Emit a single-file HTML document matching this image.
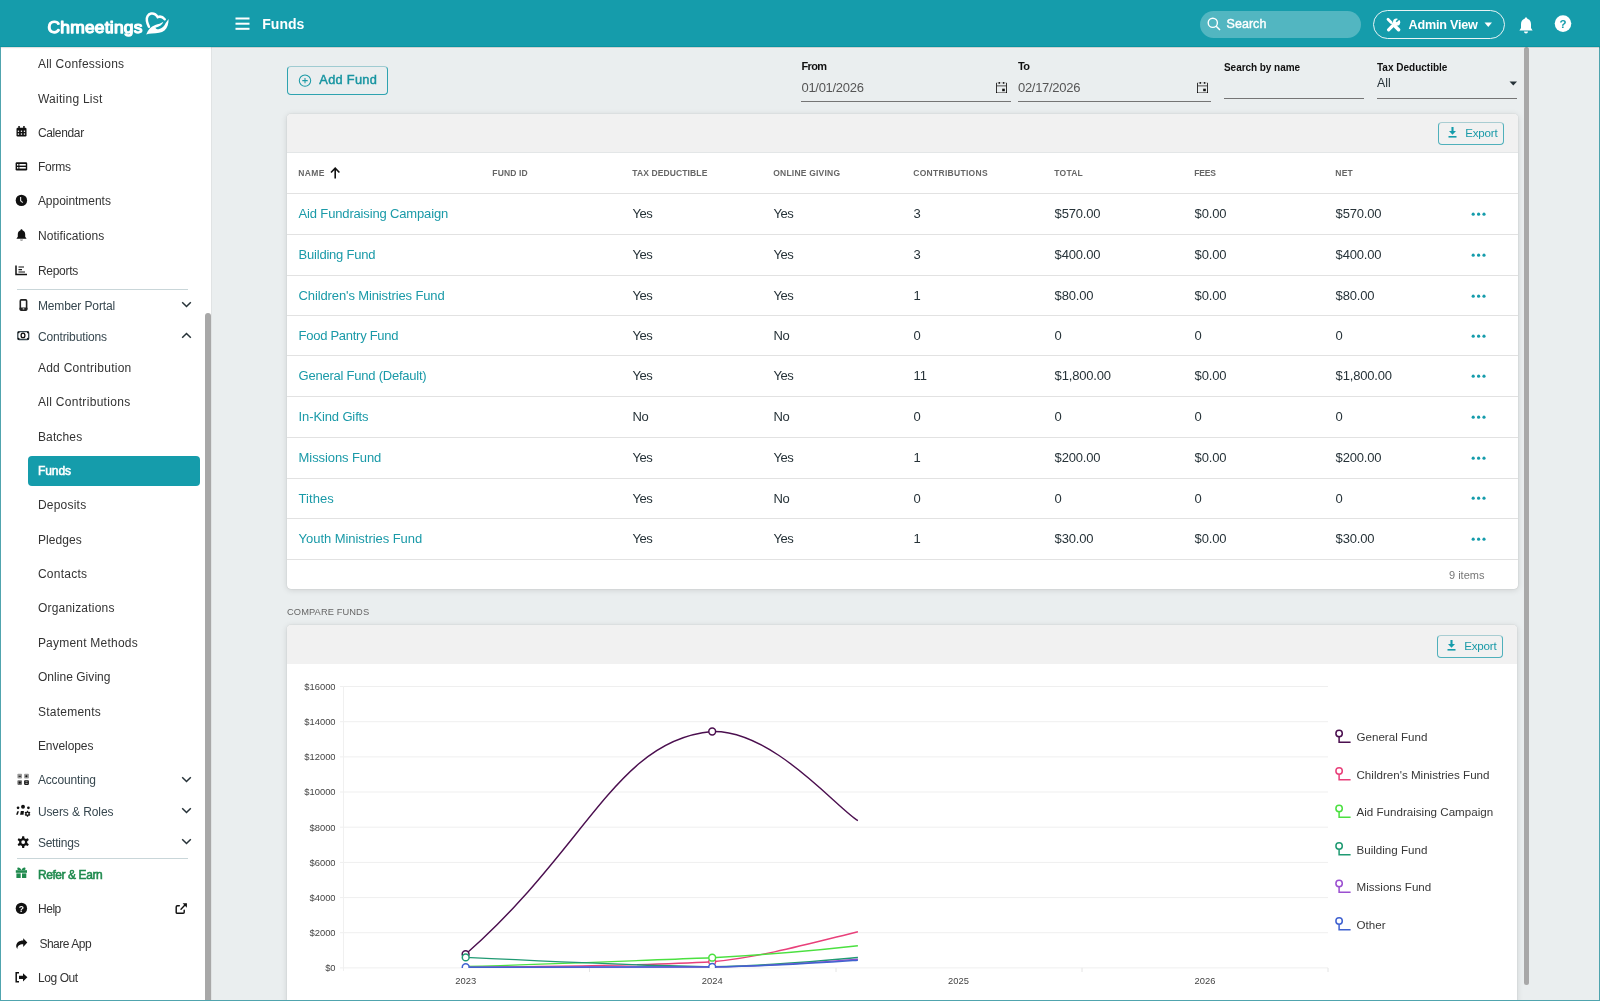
<!DOCTYPE html><html><head><meta charset="utf-8"><style>
*{box-sizing:border-box;margin:0;padding:0}
html,body{width:1600px;height:1001px;overflow:hidden;-webkit-font-smoothing:antialiased;background:#eaeeef;font-family:"Liberation Sans",sans-serif;}
.abs{position:absolute}
#hdr{will-change:transform;position:absolute;left:0;top:0;width:1600px;height:47px;background:#159cab;border-bottom:1px solid #0a94a1;box-shadow:0 1px 1px rgba(0,0,0,0.12);z-index:2}
#side{will-change:transform;position:absolute;left:0;top:47px;width:212px;height:954px;background:#fff;border-right:1px solid #e0e3e4}
#frameL{position:absolute;left:0;top:47px;width:1px;height:954px;background:#50a4ae;z-index:3}
#frameR{position:absolute;left:1599px;top:47px;width:1px;height:954px;background:#50a4ae}
#frameB{position:absolute;left:0;top:1000px;width:1600px;height:1px;background:#50a4ae}
.si{position:absolute;left:37px;height:20px;line-height:20px;font-size:12px;color:#333;letter-spacing:0.25px;white-space:nowrap}
.ic{position:absolute}
.chev{position:absolute;left:182px}
.divl{position:absolute;height:1px;background:#c9d6d9}
.card{position:absolute;background:#fff;border-radius:4px;box-shadow:0 0 1px rgba(0,0,0,0.3),0 1px 6px rgba(0,0,0,0.13)}
.chd{position:absolute;left:0;top:0;right:0;background:#f1f1f1;border-radius:4px 4px 0 0;border-bottom:1px solid #e3e6e7}
.th{position:absolute;font-size:9px;font-weight:bold;color:#666;height:14px;line-height:14px;white-space:nowrap;letter-spacing:0}
.td{position:absolute;font-size:13px;color:#263238;height:20px;line-height:20px;white-space:nowrap}
.lnk{color:#1a9aa8}
.rl{position:absolute;left:0;right:0;height:1px;background:#e2e2e2}
.btnx{position:absolute;border:1px solid #3aa6b2;border-radius:4px;color:#159cab;font-size:11.5px}
.lbl{position:absolute;font-size:11px;font-weight:bold;color:#111;white-space:nowrap}
.val{position:absolute;font-size:13px;color:#555;white-space:nowrap}
.ul{position:absolute;height:1px;background:#757575}
.ax{font-family:"Liberation Sans",sans-serif;font-size:9.4px;fill:#444}
.lg{font-family:"Liberation Sans",sans-serif;font-size:11.6px;fill:#383838}
</style></head><body><div id="hdr"><svg class="abs" style="left:40px;top:8px" width="110" height="34" viewBox="0 0 110 34"><text x="7.6" y="25" font-family="Liberation Sans" font-size="17.4" fill="#fff" stroke="#fff" stroke-width="1.25" stroke-linejoin="round" letter-spacing="0.22">Chmeetings</text></svg><svg class="ic" style="left:140px;top:8px" width="35" height="30" viewBox="0 0 35 30" ><path d="M8.9 18.8 C7.2 15.2 5.8 11.2 7.6 8.1 C9.3 5.3 12.7 4.8 15.2 6.4 C16.4 7.2 17.1 8 17.7 9.1 C19.6 8.3 22.6 8.7 24.7 11.2" fill="none" stroke="#fff" stroke-width="2.5" stroke-linecap="round"/><path d="M6.2 26.5 C8 21.8 10.8 18.4 15.2 17 C18.2 16.1 21.2 15.5 23.4 13.8 C22.4 16.8 19.6 18.9 15.4 19.7 C15.9 20.6 16.4 21.1 17.2 21.2 C21.2 21.2 24 18.6 25.4 15.4 L28.6 11 C28.7 15.5 27.5 20 24.5 22.6 C21.7 25 17 25.3 12 25.5 C9.8 25.6 7.8 25.9 6.2 26.5 Z" fill="#fff"/></svg><svg class="ic" style="left:235px;top:16px" width="15" height="14" viewBox="0 0 15 14" ><rect x="0.5" y="1.5" width="14" height="2" fill="#fff"/><rect x="0.5" y="6.7" width="14" height="2" fill="#fff"/><rect x="0.5" y="11.8" width="14" height="2" fill="#fff"/></svg><div class="abs" style="left:262.3px;top:13.6px;height:21px;line-height:21px;font-size:14px;font-weight:bold;color:#fff">Funds</div><div class="abs" style="left:1200px;top:11px;width:161px;height:27px;border-radius:14px;background:#52b6c1"></div><svg class="ic" style="left:1207px;top:17px" width="14" height="14" viewBox="0 0 14 14" ><circle cx="5.8" cy="5.8" r="4.6" fill="none" stroke="#fff" stroke-width="1.4"/><path d="M9.2 9.2 L13 13" stroke="#fff" stroke-width="1.5"/></svg><div class="abs" style="left:1226.5px;top:14.2px;height:20px;line-height:20px;font-size:12.5px;color:#fff;-webkit-text-stroke:0.4px #fff;letter-spacing:0.05px">Search</div><div class="abs" style="left:1373px;top:10px;width:132px;height:29px;border-radius:15px;border:1.5px solid #e8f4f5"></div><svg class="ic" style="left:1386px;top:17px" width="16" height="15" viewBox="0 0 16 15" ><g stroke="#fff" fill="none" stroke-linecap="round"><path d="M2 2.2 L5.2 5.4" stroke-width="2.8"/><path d="M5.2 5.4 L8.2 8.4" stroke-width="1.3"/><path d="M8.6 8.8 L12.6 12.8" stroke-width="3.4"/><path d="M2.6 12.8 L7.4 8" stroke-width="3.2"/></g><circle cx="10.6" cy="5.2" r="3.6" fill="#fff"/><path d="M11 1 L15.5 1 L15.5 5 Z" fill="#159cab"/><path d="M10.2 4.8 L13 2" stroke="#159cab" stroke-width="1.6"/></svg><div class="abs" style="left:1408.5px;top:14.8px;height:20px;line-height:20px;font-size:12.6px;font-weight:bold;color:#fff;letter-spacing:-0.2px">Admin View</div><svg class="ic" style="left:1484px;top:22px" width="9" height="6" viewBox="0 0 9 6" ><path d="M0.5 0.5 L8 0.5 L4.25 5 Z" fill="#fff"/></svg><svg class="ic" style="left:1519px;top:17px" width="14" height="17" viewBox="0 0 14 17" ><path d="M7 0.5 C7.8 0.5 8.3 1 8.3 1.8 C10.8 2.5 12 4.6 12 7.2 L12 11 L13.6 13.4 L0.4 13.4 L2 11 L2 7.2 C2 4.6 3.2 2.5 5.7 1.8 C5.7 1 6.2 0.5 7 0.5 Z" fill="#fff"/><path d="M5 14.6 C5 15.8 5.9 16.5 7 16.5 C8.1 16.5 9 15.8 9 14.6 Z" fill="#fff"/></svg><svg class="ic" style="left:1554px;top:15px" width="18" height="18" viewBox="0 0 18 18" ><circle cx="9" cy="8.6" r="8.3" fill="#fff"/><text x="9" y="12.6" text-anchor="middle" font-family="Liberation Sans" font-weight="bold" font-size="11.5" fill="#159cab">?</text></svg></div><div id="side"><div class="si" style="left:37.9px;top:6.9px;font-size:12px;;letter-spacing:0.250px">All Confessions</div><div class="si" style="left:37.9px;top:41.8px;font-size:12px;;letter-spacing:0.266px">Waiting List</div><div class="si" style="left:37.9px;top:75.9px;font-size:12px;;letter-spacing:-0.350px">Calendar</div><svg class="ic" style="left:15.5px;top:79px" width="11" height="11" viewBox="0 0 11 11" ><rect x="0.5" y="1.8" width="10" height="8.7" rx="1.2" fill="#111"/><rect x="2.3" y="0" width="1.5" height="3" fill="#111"/><rect x="7.2" y="0" width="1.5" height="3" fill="#111"/><g fill="#fff"><rect x="1.8" y="4.6" width="1.3" height="1.3"/><rect x="4.8" y="4.6" width="1.3" height="1.3"/><rect x="7.8" y="4.6" width="1.3" height="1.3"/><rect x="1.8" y="7.4" width="1.3" height="1.3"/><rect x="4.8" y="7.4" width="1.3" height="1.3"/><rect x="7.8" y="7.4" width="1.3" height="1.3"/></g></svg><div class="si" style="left:37.9px;top:110.4px;font-size:12px;;letter-spacing:-0.249px">Forms</div><svg class="ic" style="left:15px;top:115px" width="13" height="9" viewBox="0 0 13 9" ><rect x="0.6" y="0.3" width="11.6" height="8.2" rx="1.3" fill="#111"/><g fill="#fff"><rect x="2" y="2" width="1.4" height="1.6"/><rect x="4.4" y="2" width="6.4" height="1.6"/><rect x="2" y="5" width="1.4" height="1.6"/><rect x="4.4" y="5" width="6.4" height="1.6"/></g></svg><div class="si" style="left:37.9px;top:144.3px;font-size:12px;;letter-spacing:-0.034px">Appointments</div><svg class="ic" style="left:15px;top:147px" width="13" height="13" viewBox="0 0 13 13" ><circle cx="6.4" cy="6.4" r="5.7" fill="#111"/><path d="M5.6 3 L5.6 6.8 L7.8 8.6" stroke="#ddd" stroke-width="1.2" fill="none"/></svg><div class="si" style="left:37.9px;top:179.1px;font-size:12px;;letter-spacing:0.074px">Notifications</div><svg class="ic" style="left:15.7px;top:182px" width="11" height="12" viewBox="0 0 11 12" ><path d="M5.5 0.2 C6.2 0.2 6.5 0.7 6.5 1.2 C8.3 1.8 9.2 3.4 9.2 5.3 L9.2 7.8 L10.6 9.7 L0.4 9.7 L1.8 7.8 L1.8 5.3 C1.8 3.4 2.7 1.8 4.5 1.2 C4.5 0.7 4.8 0.2 5.5 0.2 Z" fill="#111"/><path d="M4 10.5 L7 10.5 C7 11.3 6.3 11.8 5.5 11.8 C4.7 11.8 4 11.3 4 10.5Z" fill="#888"/></svg><div class="si" style="left:37.9px;top:213.8px;font-size:12px;;letter-spacing:-0.286px">Reports</div><svg class="ic" style="left:15px;top:218px" width="13" height="11" viewBox="0 0 13 11" ><path d="M1 0.5 L1 9.5 L12 9.5" stroke="#111" stroke-width="1.5" fill="none"/><path d="M3.5 2 L9 2 M3.5 4.6 L7 4.6 M3.5 7 L10 7" stroke="#111" stroke-width="1.2"/></svg><div class="si" style="left:37.9px;top:248.5px;font-size:12px;color:#37474f;letter-spacing:-0.108px">Member Portal</div><svg class="ic" style="left:18.5px;top:251.5px" width="9" height="12" viewBox="0 0 9 12" ><rect x="1.3" y="0.9" width="6.3" height="10.2" rx="1" fill="none" stroke="#222" stroke-width="1.6"/><rect x="0.6" y="8.6" width="7.8" height="2.8" rx="0.6" fill="#222"/><rect x="3.7" y="9.4" width="1.6" height="1" fill="#fff"/></svg><svg class="ic" style="left:181px;top:254px" width="11" height="7" viewBox="0 0 11 7" ><path d="M1.2 1.2 L5.5 5.5 L9.8 1.2" stroke="#263238" stroke-width="1.5" fill="none"/></svg><div class="si" style="left:37.9px;top:279.8px;font-size:12px;color:#37474f;letter-spacing:-0.134px">Contributions</div><svg class="ic" style="left:12px;top:280px" width="20" height="18" viewBox="0 0 20 18" ><rect x="5.8" y="4.6" width="10.9" height="7.9" rx="1.3" stroke="#37474f" stroke-width="1.3" fill="none"/><g fill="#111"><circle cx="6.6" cy="5.4" r="0.95"/><circle cx="15.9" cy="5.4" r="0.95"/><circle cx="6.6" cy="11.7" r="0.95"/><circle cx="15.9" cy="11.7" r="0.95"/></g><ellipse cx="11" cy="8.4" rx="1.9" ry="2.25" stroke="#111" stroke-width="1.3" fill="none"/></svg><svg class="ic" style="left:181px;top:285px" width="11" height="7" viewBox="0 0 11 7" ><path d="M1.2 5.8 L5.5 1.5 L9.8 5.8" stroke="#263238" stroke-width="1.5" fill="none"/></svg><div class="si" style="left:37.9px;top:310.8px;font-size:12px;;letter-spacing:0.267px">Add Contribution</div><div class="si" style="left:37.9px;top:345.0px;font-size:12px;;letter-spacing:0.308px">All Contributions</div><div class="si" style="left:37.9px;top:379.9px;font-size:12px;;letter-spacing:0.157px">Batches</div><div class="abs" style="left:27.7px;top:408.7px;width:172.6px;height:30px;border-radius:4px;background:#159cab"></div><div class="si" style="left:37.9px;top:414.2px;font-size:12px;color:#fff;-webkit-text-stroke:0.55px #fff;letter-spacing:-0.063px">Funds</div><div class="si" style="left:37.9px;top:448.4px;font-size:12px;;letter-spacing:0.230px">Deposits</div><div class="si" style="left:37.9px;top:482.6px;font-size:12px;;letter-spacing:0.072px">Pledges</div><div class="si" style="left:37.9px;top:517.0px;font-size:12px;;letter-spacing:0.249px">Contacts</div><div class="si" style="left:37.9px;top:551.4px;font-size:12px;;letter-spacing:0.205px">Organizations</div><div class="si" style="left:37.9px;top:585.6px;font-size:12px;;letter-spacing:0.220px">Payment Methods</div><div class="si" style="left:37.9px;top:620.0px;font-size:12px;;letter-spacing:0.047px">Online Giving</div><div class="si" style="left:37.9px;top:654.5px;font-size:12px;;letter-spacing:0.245px">Statements</div><div class="si" style="left:37.9px;top:688.8px;font-size:12px;;letter-spacing:-0.055px">Envelopes</div><div class="si" style="left:37.9px;top:723.3px;font-size:12px;color:#37474f;letter-spacing:-0.141px">Accounting</div><svg class="ic" style="left:14px;top:723px" width="18" height="18" viewBox="0 0 18 18" ><rect x="3.4" y="3.8" width="4.6" height="4.8" rx="0.8" fill="#9a9a9a"/><rect x="4.6" y="5.8" width="2.3" height="1" fill="#222"/><rect x="10.1" y="3.8" width="4.8" height="4.8" rx="0.8" fill="#9a9a9a"/><circle cx="12.4" cy="6.3" r="1" fill="#111"/><rect x="3.4" y="10.3" width="4.6" height="4.6" rx="0.8" fill="#707070"/><circle cx="5.8" cy="12.6" r="1.1" fill="#111"/><rect x="10.1" y="10.3" width="4.8" height="4.6" rx="0.8" fill="#1a1a1a"/><rect x="11.4" y="11.3" width="2.2" height="0.9" fill="#aaa"/><rect x="11.4" y="13" width="2.2" height="0.9" fill="#aaa"/></svg><svg class="ic" style="left:181px;top:729px" width="11" height="7" viewBox="0 0 11 7" ><path d="M1.2 1.2 L5.5 5.5 L9.8 1.2" stroke="#263238" stroke-width="1.5" fill="none"/></svg><div class="si" style="left:37.9px;top:754.7px;font-size:12px;color:#37474f;letter-spacing:-0.091px">Users &amp; Roles</div><svg class="ic" style="left:14px;top:754px" width="20" height="18" viewBox="0 0 20 18" ><g fill="#111"><circle cx="4.05" cy="6.8" r="1.35"/><circle cx="9" cy="5.75" r="1.95"/><circle cx="14.4" cy="6.8" r="1.35"/><path d="M3.3 10.2 L4.9 10.2 L3.8 13.8 L2.1 13.8 Z"/><path d="M6.9 10.1 L9.9 10.1 L9.6 13.8 L6.1 13.8 Z"/><path d="M12.88 9.87 L14.12 9.87 L14.24 10.68 L14.97 11.10 L15.73 10.79 L16.35 11.87 L15.71 12.38 L15.71 13.22 L16.35 13.73 L15.73 14.81 L14.97 14.50 L14.24 14.92 L14.12 15.73 L12.88 15.73 L12.76 14.92 L12.03 14.50 L11.27 14.81 L10.65 13.73 L11.29 13.22 L11.29 12.38 L10.65 11.87 L11.27 10.79 L12.03 11.10 L12.76 10.68 Z"/></g><circle cx="13.5" cy="12.8" r="0.95" fill="#fff"/></svg><svg class="ic" style="left:181px;top:760px" width="11" height="7" viewBox="0 0 11 7" ><path d="M1.2 1.2 L5.5 5.5 L9.8 1.2" stroke="#263238" stroke-width="1.5" fill="none"/></svg><div class="si" style="left:37.9px;top:785.8px;font-size:12px;color:#37474f;letter-spacing:-0.223px">Settings</div><svg class="ic" style="left:14px;top:785px" width="18" height="20" viewBox="0 0 18 20" ><path d="M8.20 4.18 L10.20 4.18 L10.47 6.20 L11.94 7.05 L13.82 6.28 L14.82 8.01 L13.21 9.25 L13.21 10.95 L14.82 12.19 L13.82 13.92 L11.94 13.15 L10.47 14.00 L10.20 16.02 L8.20 16.02 L7.93 14.00 L6.46 13.15 L4.58 13.92 L3.58 12.19 L5.19 10.95 L5.19 9.25 L3.58 8.01 L4.58 6.28 L6.46 7.05 L7.93 6.20 Z" fill="#111"/><circle cx="9.2" cy="10.1" r="1.9" fill="#fff"/></svg><svg class="ic" style="left:181px;top:791px" width="11" height="7" viewBox="0 0 11 7" ><path d="M1.2 1.2 L5.5 5.5 L9.8 1.2" stroke="#263238" stroke-width="1.5" fill="none"/></svg><div class="si" style="left:37.9px;top:818.1px;font-size:12px;color:#1f8a4e;-webkit-text-stroke:0.55px #1f8a4e;letter-spacing:-0.415px">Refer &amp; Earn</div><svg class="ic" style="left:15px;top:820px" width="13" height="12" viewBox="0 0 13 12" ><g fill="#1f8a4e"><path d="M3 0.5 C4.5 0.3 5.8 1.6 6.3 3 L4 3 C2.8 3 2.2 2.4 2.3 1.7 C2.3 1 2.6 0.6 3 0.5Z M9.8 0.5 C8.3 0.3 7 1.6 6.6 3 L8.8 3 C10 3 10.6 2.4 10.5 1.7 C10.5 1 10.2 0.6 9.8 0.5Z"/><rect x="0.8" y="3.2" width="11.2" height="2.6"/><rect x="1.4" y="6.4" width="4.3" height="4.6"/><rect x="7" y="6.4" width="4.3" height="4.6"/></g></svg><div class="si" style="left:37.9px;top:852.4px;font-size:12px;;letter-spacing:-0.427px">Help</div><svg class="ic" style="left:15px;top:855px" width="13" height="13" viewBox="0 0 13 13" ><circle cx="6.4" cy="6.4" r="5.7" fill="#111"/><text x="6.4" y="9.8" text-anchor="middle" font-family="Liberation Sans" font-weight="bold" font-size="8.5" fill="#fff">?</text></svg><svg class="ic" style="left:175px;top:855px" width="13" height="13" viewBox="0 0 13 13" ><path d="M4.3 3.8 L2.4 3.8 Q1.2 3.8 1.2 5 L1.2 10.6 Q1.2 11.3 1.9 11.3 L8.2 11.3 Q9.2 11.3 9.2 10.3 L9.2 8.3" stroke="#111" stroke-width="1.45" fill="none" stroke-linecap="round"/><path d="M6 7.2 L10.4 2.6" stroke="#111" stroke-width="1.4" stroke-linecap="round"/><path d="M7.6 1.2 L12 1.2 L11.8 5.8 Z" fill="#111"/></svg><div class="si" style="left:39.4px;top:886.6px;font-size:12px;;letter-spacing:-0.476px">Share App</div><svg class="ic" style="left:12px;top:886px" width="20" height="20" viewBox="0 0 20 20" ><path d="M15.3 9.4 L11.2 5.3 L11.2 7.6 C7.2 7.6 4.1 9.6 4.2 13.6 C4.3 14.6 4.7 15.4 5.4 15.9 C5.3 13.2 7.2 11.2 11.2 11.2 L11.2 13.9 Z" fill="#111"/></svg><div class="si" style="left:37.9px;top:920.8px;font-size:12px;;letter-spacing:-0.400px">Log Out</div><svg class="ic" style="left:15px;top:925px" width="13" height="11" viewBox="0 0 13 11" ><path d="M4 0.8 L1.2 0.8 L1.2 9.8 L4 9.8" stroke="#111" stroke-width="1.5" fill="none"/><path d="M12.4 5.3 L8 1.2 L8 3.7 L4 3.7 L4 6.9 L8 6.9 L8 9.4 Z" fill="#111"/></svg><div class="divl" style="left:17px;top:242px;width:171px"></div><div class="divl" style="left:17px;top:811px;width:171px"></div><div class="abs" style="left:205px;top:266px;width:5.6px;height:700px;border-radius:3px;background:#a8a8a8"></div></div><div id="main" style="position:absolute;left:0;top:0;width:1600px;height:1001px;will-change:transform"><div class="abs" style="left:212px;top:48px;width:1387px;height:1px;background:#f3f4f4"></div><div class="abs" style="left:287px;top:66px;width:101px;height:29px;border:1px solid #2ea3b0;border-top-color:#9fcbd1;border-radius:4px"></div><svg class="ic" style="left:298px;top:74px" width="14" height="14" viewBox="0 0 14 14" ><circle cx="7" cy="6.6" r="5.7" fill="none" stroke="#1b9aa6" stroke-width="1.05"/><path d="M7 3.9 L7 9.3 M4.3 6.6 L9.7 6.6" stroke="#1b9aa6" stroke-width="1.05"/></svg><div class="abs" style="left:319.3px;top:70px;height:20px;line-height:20px;font-size:12.8px;color:#1895a1;-webkit-text-stroke:0.45px #1895a1;letter-spacing:0.3px">Add Fund</div><div class="lbl" style="left:801.4px;top:59px;height:14px;line-height:14px;letter-spacing:-0.6px">From</div><div class="val" style="left:801.5px;top:77.5px;height:20px;line-height:20px;letter-spacing:-0.3px">01/01/2026</div><svg class="ic" style="left:996px;top:82px" width="11" height="11" viewBox="0 0 11 11" ><rect x="0" y="0.8" width="1" height="10.2" fill="#333"/><rect x="10" y="0.8" width="1" height="10.2" fill="#333"/><rect x="1" y="0.4" width="9" height="0.8" fill="#bbb"/><circle cx="3.3" cy="0.9" r="0.9" fill="#111"/><circle cx="7.6" cy="0.9" r="0.9" fill="#111"/><rect x="1" y="3" width="9" height="1.6" fill="#888"/><rect x="0" y="10" width="11" height="1" fill="#888"/><rect x="0" y="10" width="1" height="1" fill="#111"/><rect x="10" y="10" width="1" height="1" fill="#111"/><rect x="6.2" y="6.7" width="2.6" height="2.5" fill="#111"/></svg><div class="ul" style="left:801px;top:101px;width:210px"></div><div class="lbl" style="left:1018px;top:59px;height:14px;line-height:14px;letter-spacing:-0.6px">To</div><div class="val" style="left:1018px;top:77.5px;height:20px;line-height:20px;letter-spacing:-0.3px">02/17/2026</div><svg class="ic" style="left:1197px;top:82px" width="11" height="11" viewBox="0 0 11 11" ><rect x="0" y="0.8" width="1" height="10.2" fill="#333"/><rect x="10" y="0.8" width="1" height="10.2" fill="#333"/><rect x="1" y="0.4" width="9" height="0.8" fill="#bbb"/><circle cx="3.3" cy="0.9" r="0.9" fill="#111"/><circle cx="7.6" cy="0.9" r="0.9" fill="#111"/><rect x="1" y="3" width="9" height="1.6" fill="#888"/><rect x="0" y="10" width="11" height="1" fill="#888"/><rect x="0" y="10" width="1" height="1" fill="#111"/><rect x="10" y="10" width="1" height="1" fill="#111"/><rect x="6.2" y="6.7" width="2.6" height="2.5" fill="#111"/></svg><div class="ul" style="left:1018px;top:101px;width:193px"></div><div class="lbl" style="left:1224px;top:61px;height:14px;line-height:14px;font-size:10px;letter-spacing:-0.05px">Search by name</div><div class="ul" style="left:1224px;top:98px;width:140px"></div><div class="lbl" style="left:1377px;top:61px;height:14px;line-height:14px;font-size:10px">Tax Deductible</div><div class="val" style="left:1377px;top:73px;height:20px;line-height:20px;font-size:12.3px;color:#263238">All</div><svg class="ic" style="left:1509px;top:81px" width="9" height="5" viewBox="0 0 9 5" ><path d="M0.5 0.5 L8 0.5 L4.25 4.5 Z" fill="#263238"/></svg><div class="ul" style="left:1377px;top:98px;width:140px"></div><div class="card" style="left:287px;top:114px;width:1231px;height:475px"><div class="chd" style="height:39px"></div><div class="abs" style="left:1150.5px;top:7.7px;width:66px;height:23px;border:1px solid #4fb0bb;border-top-color:#a9cdd2;border-radius:4px"></div><svg class="ic" style="left:1160.5px;top:13px" width="9" height="11" viewBox="0 0 9 11" ><path d="M4.5 0 L4.5 5" stroke="#159cab" stroke-width="2.1"/><path d="M1 4 L4.5 7.8 L8 4 Z" fill="#159cab"/><rect x="0.5" y="9" width="8" height="1.6" fill="#159cab"/></svg><div class="abs" style="left:1178.2px;top:9.8px;height:18px;line-height:18px;font-size:11.6px;color:#1b9aa8;letter-spacing:-0.2px">Export</div><div class="th" style="left:11.3px;top:52.30000000000001px;font-size:8.5px;letter-spacing:0.324px">NAME</div><div class="th" style="left:205.3px;top:52.30000000000001px;font-size:8.5px;letter-spacing:0.139px">FUND ID</div><div class="th" style="left:345.3px;top:52.30000000000001px;font-size:8.5px;letter-spacing:0.115px">TAX DEDUCTIBLE</div><div class="th" style="left:486.3px;top:52.30000000000001px;font-size:8.5px;letter-spacing:0.206px">ONLINE GIVING</div><div class="th" style="left:626.3px;top:52.30000000000001px;font-size:8.5px;letter-spacing:0.289px">CONTRIBUTIONS</div><div class="th" style="left:767.3px;top:52.30000000000001px;font-size:8.5px;letter-spacing:0.240px">TOTAL</div><div class="th" style="left:907.3px;top:52.30000000000001px;font-size:8.5px;letter-spacing:-0.200px">FEES</div><div class="th" style="left:1048.3px;top:52.30000000000001px;font-size:8.5px;letter-spacing:0.250px">NET</div><svg class="ic" style="left:43px;top:53px" width="11" height="12" viewBox="0 0 11 12" ><path d="M5.2 11.5 L5.2 1.5 M1 5.5 L5.2 1.2 L9.4 5.5" stroke="#111" stroke-width="1.6" fill="none"/></svg><div class="rl" style="top:79px"></div><div class="td lnk" style="left:11.6px;top:90.4px;letter-spacing:-0.156px">Aid Fundraising Campaign</div><div class="td" style="left:345.6px;top:90.4px;letter-spacing:-0.500px">Yes</div><div class="td" style="left:486.6px;top:90.4px;letter-spacing:-0.500px">Yes</div><div class="td" style="left:626.6px;top:90.4px;letter-spacing:-0.170px">3</div><div class="td" style="left:767.6px;top:90.4px;letter-spacing:-0.170px">$570.00</div><div class="td" style="left:907.6px;top:90.4px;letter-spacing:-0.170px">$0.00</div><div class="td" style="left:1048.6px;top:90.4px;letter-spacing:-0.170px">$570.00</div><svg class="ic" style="left:1184px;top:98px" width="16" height="5" viewBox="0 0 16 5" ><circle cx="2.2" cy="2.2" r="1.6" fill="#159cab"/><circle cx="7.6" cy="2.2" r="1.6" fill="#159cab"/><circle cx="13" cy="2.2" r="1.6" fill="#159cab"/></svg><div class="rl" style="top:120px"></div><div class="td lnk" style="left:11.6px;top:131.4px;letter-spacing:-0.217px">Building Fund</div><div class="td" style="left:345.6px;top:131.4px;letter-spacing:-0.500px">Yes</div><div class="td" style="left:486.6px;top:131.4px;letter-spacing:-0.500px">Yes</div><div class="td" style="left:626.6px;top:131.4px;letter-spacing:-0.170px">3</div><div class="td" style="left:767.6px;top:131.4px;letter-spacing:-0.170px">$400.00</div><div class="td" style="left:907.6px;top:131.4px;letter-spacing:-0.170px">$0.00</div><div class="td" style="left:1048.6px;top:131.4px;letter-spacing:-0.170px">$400.00</div><svg class="ic" style="left:1184px;top:139px" width="16" height="5" viewBox="0 0 16 5" ><circle cx="2.2" cy="2.2" r="1.6" fill="#159cab"/><circle cx="7.6" cy="2.2" r="1.6" fill="#159cab"/><circle cx="13" cy="2.2" r="1.6" fill="#159cab"/></svg><div class="rl" style="top:161px"></div><div class="td lnk" style="left:11.6px;top:171.9px;letter-spacing:-0.122px">Children's Ministries Fund</div><div class="td" style="left:345.6px;top:171.9px;letter-spacing:-0.500px">Yes</div><div class="td" style="left:486.6px;top:171.9px;letter-spacing:-0.500px">Yes</div><div class="td" style="left:626.6px;top:171.9px;letter-spacing:-0.170px">1</div><div class="td" style="left:767.6px;top:171.9px;letter-spacing:-0.170px">$80.00</div><div class="td" style="left:907.6px;top:171.9px;letter-spacing:-0.170px">$0.00</div><div class="td" style="left:1048.6px;top:171.9px;letter-spacing:-0.170px">$80.00</div><svg class="ic" style="left:1184px;top:180px" width="16" height="5" viewBox="0 0 16 5" ><circle cx="2.2" cy="2.2" r="1.6" fill="#159cab"/><circle cx="7.6" cy="2.2" r="1.6" fill="#159cab"/><circle cx="13" cy="2.2" r="1.6" fill="#159cab"/></svg><div class="rl" style="top:201px"></div><div class="td lnk" style="left:11.6px;top:211.9px;letter-spacing:-0.277px">Food Pantry Fund</div><div class="td" style="left:345.6px;top:211.9px;letter-spacing:-0.500px">Yes</div><div class="td" style="left:486.6px;top:211.9px;letter-spacing:-0.500px">No</div><div class="td" style="left:626.6px;top:211.9px;letter-spacing:-0.170px">0</div><div class="td" style="left:767.6px;top:211.9px;letter-spacing:-0.170px">0</div><div class="td" style="left:907.6px;top:211.9px;letter-spacing:-0.170px">0</div><div class="td" style="left:1048.6px;top:211.9px;letter-spacing:-0.170px">0</div><svg class="ic" style="left:1184px;top:220px" width="16" height="5" viewBox="0 0 16 5" ><circle cx="2.2" cy="2.2" r="1.6" fill="#159cab"/><circle cx="7.6" cy="2.2" r="1.6" fill="#159cab"/><circle cx="13" cy="2.2" r="1.6" fill="#159cab"/></svg><div class="rl" style="top:241px"></div><div class="td lnk" style="left:11.6px;top:252.4px;letter-spacing:-0.231px">General Fund (Default)</div><div class="td" style="left:345.6px;top:252.4px;letter-spacing:-0.500px">Yes</div><div class="td" style="left:486.6px;top:252.4px;letter-spacing:-0.500px">Yes</div><div class="td" style="left:626.6px;top:252.4px;letter-spacing:-0.170px">11</div><div class="td" style="left:767.6px;top:252.4px;letter-spacing:-0.170px">$1,800.00</div><div class="td" style="left:907.6px;top:252.4px;letter-spacing:-0.170px">$0.00</div><div class="td" style="left:1048.6px;top:252.4px;letter-spacing:-0.170px">$1,800.00</div><svg class="ic" style="left:1184px;top:260px" width="16" height="5" viewBox="0 0 16 5" ><circle cx="2.2" cy="2.2" r="1.6" fill="#159cab"/><circle cx="7.6" cy="2.2" r="1.6" fill="#159cab"/><circle cx="13" cy="2.2" r="1.6" fill="#159cab"/></svg><div class="rl" style="top:282px"></div><div class="td lnk" style="left:11.6px;top:293.4px;letter-spacing:-0.127px">In-Kind Gifts</div><div class="td" style="left:345.6px;top:293.4px;letter-spacing:-0.500px">No</div><div class="td" style="left:486.6px;top:293.4px;letter-spacing:-0.500px">No</div><div class="td" style="left:626.6px;top:293.4px;letter-spacing:-0.170px">0</div><div class="td" style="left:767.6px;top:293.4px;letter-spacing:-0.170px">0</div><div class="td" style="left:907.6px;top:293.4px;letter-spacing:-0.170px">0</div><div class="td" style="left:1048.6px;top:293.4px;letter-spacing:-0.170px">0</div><svg class="ic" style="left:1184px;top:301px" width="16" height="5" viewBox="0 0 16 5" ><circle cx="2.2" cy="2.2" r="1.6" fill="#159cab"/><circle cx="7.6" cy="2.2" r="1.6" fill="#159cab"/><circle cx="13" cy="2.2" r="1.6" fill="#159cab"/></svg><div class="rl" style="top:323px"></div><div class="td lnk" style="left:11.6px;top:334.4px;letter-spacing:-0.092px">Missions Fund</div><div class="td" style="left:345.6px;top:334.4px;letter-spacing:-0.500px">Yes</div><div class="td" style="left:486.6px;top:334.4px;letter-spacing:-0.500px">Yes</div><div class="td" style="left:626.6px;top:334.4px;letter-spacing:-0.170px">1</div><div class="td" style="left:767.6px;top:334.4px;letter-spacing:-0.170px">$200.00</div><div class="td" style="left:907.6px;top:334.4px;letter-spacing:-0.170px">$0.00</div><div class="td" style="left:1048.6px;top:334.4px;letter-spacing:-0.170px">$200.00</div><svg class="ic" style="left:1184px;top:342px" width="16" height="5" viewBox="0 0 16 5" ><circle cx="2.2" cy="2.2" r="1.6" fill="#159cab"/><circle cx="7.6" cy="2.2" r="1.6" fill="#159cab"/><circle cx="13" cy="2.2" r="1.6" fill="#159cab"/></svg><div class="rl" style="top:364px"></div><div class="td lnk" style="left:11.6px;top:374.9px;letter-spacing:0.036px">Tithes</div><div class="td" style="left:345.6px;top:374.9px;letter-spacing:-0.500px">Yes</div><div class="td" style="left:486.6px;top:374.9px;letter-spacing:-0.500px">No</div><div class="td" style="left:626.6px;top:374.9px;letter-spacing:-0.170px">0</div><div class="td" style="left:767.6px;top:374.9px;letter-spacing:-0.170px">0</div><div class="td" style="left:907.6px;top:374.9px;letter-spacing:-0.170px">0</div><div class="td" style="left:1048.6px;top:374.9px;letter-spacing:-0.170px">0</div><svg class="ic" style="left:1184px;top:382px" width="16" height="5" viewBox="0 0 16 5" ><circle cx="2.2" cy="2.2" r="1.6" fill="#159cab"/><circle cx="7.6" cy="2.2" r="1.6" fill="#159cab"/><circle cx="13" cy="2.2" r="1.6" fill="#159cab"/></svg><div class="rl" style="top:404px"></div><div class="td lnk" style="left:11.6px;top:415.4px;letter-spacing:-0.046px">Youth Ministries Fund</div><div class="td" style="left:345.6px;top:415.4px;letter-spacing:-0.500px">Yes</div><div class="td" style="left:486.6px;top:415.4px;letter-spacing:-0.500px">Yes</div><div class="td" style="left:626.6px;top:415.4px;letter-spacing:-0.170px">1</div><div class="td" style="left:767.6px;top:415.4px;letter-spacing:-0.170px">$30.00</div><div class="td" style="left:907.6px;top:415.4px;letter-spacing:-0.170px">$0.00</div><div class="td" style="left:1048.6px;top:415.4px;letter-spacing:-0.170px">$30.00</div><svg class="ic" style="left:1184px;top:423px" width="16" height="5" viewBox="0 0 16 5" ><circle cx="2.2" cy="2.2" r="1.6" fill="#159cab"/><circle cx="7.6" cy="2.2" r="1.6" fill="#159cab"/><circle cx="13" cy="2.2" r="1.6" fill="#159cab"/></svg><div class="rl" style="top:445px"></div><div class="td" style="left:1162px;top:451px;font-size:11px;color:#777">9 items</div></div><div class="abs" style="left:287px;top:605px;height:14px;line-height:14px;font-size:9.3px;color:#666;letter-spacing:0.1px">COMPARE FUNDS</div><div class="card" style="left:287px;top:625px;width:1230px;height:400px"><div class="chd" style="height:39px;border-bottom:none"></div><div class="abs" style="left:1149.5px;top:9.7px;width:66px;height:23px;border:1px solid #4fb0bb;border-top-color:#a9cdd2;border-radius:4px"></div><svg class="ic" style="left:1159.5px;top:15px" width="9" height="11" viewBox="0 0 9 11" ><path d="M4.5 0 L4.5 5" stroke="#159cab" stroke-width="2.1"/><path d="M1 4 L4.5 7.8 L8 4 Z" fill="#159cab"/><rect x="0.5" y="9" width="8" height="1.6" fill="#159cab"/></svg><div class="abs" style="left:1177.2px;top:11.8px;height:18px;line-height:18px;font-size:11.6px;color:#1b9aa8;letter-spacing:-0.2px">Export</div></div><svg class="abs" style="left:0;top:0" width="1600" height="1001"><line x1="340" y1="967.9" x2="1328" y2="967.9" stroke="#efefef" stroke-width="1"/><text class="ax" x="335.6" y="971.3" text-anchor="end">$0</text><line x1="340" y1="932.7" x2="1328" y2="932.7" stroke="#efefef" stroke-width="1"/><text class="ax" x="335.6" y="936.1" text-anchor="end">$2000</text><line x1="340" y1="897.6" x2="1328" y2="897.6" stroke="#efefef" stroke-width="1"/><text class="ax" x="335.6" y="901.0" text-anchor="end">$4000</text><line x1="340" y1="862.4" x2="1328" y2="862.4" stroke="#efefef" stroke-width="1"/><text class="ax" x="335.6" y="865.8" text-anchor="end">$6000</text><line x1="340" y1="827.2" x2="1328" y2="827.2" stroke="#efefef" stroke-width="1"/><text class="ax" x="335.6" y="830.6" text-anchor="end">$8000</text><line x1="340" y1="792.0" x2="1328" y2="792.0" stroke="#efefef" stroke-width="1"/><text class="ax" x="335.6" y="795.4" text-anchor="end">$10000</text><line x1="340" y1="756.9" x2="1328" y2="756.9" stroke="#efefef" stroke-width="1"/><text class="ax" x="335.6" y="760.3" text-anchor="end">$12000</text><line x1="340" y1="721.7" x2="1328" y2="721.7" stroke="#efefef" stroke-width="1"/><text class="ax" x="335.6" y="725.1" text-anchor="end">$14000</text><line x1="340" y1="686.5" x2="1328" y2="686.5" stroke="#efefef" stroke-width="1"/><text class="ax" x="335.6" y="689.9" text-anchor="end">$16000</text><line x1="343.5" y1="686" x2="343.5" y2="971" stroke="#f0f0f0" stroke-width="1"/><line x1="589.5" y1="967.9" x2="589.5" y2="972" stroke="#e4e4e4" stroke-width="1"/><line x1="836" y1="967.9" x2="836" y2="972" stroke="#e4e4e4" stroke-width="1"/><line x1="1082" y1="967.9" x2="1082" y2="972" stroke="#e4e4e4" stroke-width="1"/><line x1="1328" y1="967.9" x2="1328" y2="972" stroke="#e4e4e4" stroke-width="1"/><text class="ax" x="465.8" y="983.6" text-anchor="middle">2023</text><text class="ax" x="712.2" y="983.6" text-anchor="middle">2024</text><text class="ax" x="958.5" y="983.6" text-anchor="middle">2025</text><text class="ax" x="1205" y="983.6" text-anchor="middle">2026</text><defs><clipPath id="pc"><rect x="343" y="670" width="515.5" height="298"/></clipPath></defs><g clip-path="url(#pc)"><g fill="none" stroke-width="1.4"><path d="M465.6 954.2 C588.3 846.6 616.1 739.9 712.2 731.5 C772.9 730.1 836.1 807.5 857.9 820.6" stroke="#4b0f4f"/><path d="M465.7 967.2 C560 966.5 660 964.8 712.2 961.7 C760 957.5 812 943 857.9 931.7" stroke="#e8407a"/><path d="M465.7 966.5 C560 964 650 960 712.2 957.7 C770 954.5 820 950 857.9 945.7" stroke="#4be040"/><path d="M465.7 957.4 C540 961 650 966 712.2 966.8 C770 966 820 961 857.9 957.5" stroke="#1f9a72"/><path d="M465.7 967.2 C560 967.2 660 967.2 712.2 967 C770 966.4 820 962 857.9 959.2" stroke="#9b4fd0"/><path d="M465.7 967.2 C560 967.2 660 967.2 712.2 966.9 C770 966.4 820 962.8 857.9 960.2" stroke="#4062d0"/></g><circle cx="465.6" cy="954.2" r="3.4" fill="#fff" stroke="#4b0f4f" stroke-width="1.5"/><circle cx="465.7" cy="957.4" r="3.4" fill="#fff" stroke="#1f9a72" stroke-width="1.5"/><circle cx="465.7" cy="967.2" r="3.4" fill="#fff" stroke="#4062d0" stroke-width="1.5"/><circle cx="712.2" cy="731.5" r="3.4" fill="#fff" stroke="#4b0f4f" stroke-width="1.5"/><circle cx="712.2" cy="961.7" r="3.4" fill="#fff" stroke="#e8407a" stroke-width="1.5"/><circle cx="712.2" cy="957.7" r="3.4" fill="#fff" stroke="#4be040" stroke-width="1.5"/><circle cx="712.2" cy="967" r="3.4" fill="#fff" stroke="#4062d0" stroke-width="1.5"/></g><circle cx="1339.1" cy="733.5" r="3.2" fill="none" stroke="#4b0f4f" stroke-width="1.5"/><path d="M1339.1 736.7 L1339.1 742.3 L1350.6 742.3" fill="none" stroke="#4b0f4f" stroke-width="1.5"/><text class="lg" x="1356.5" y="741.0">General Fund</text><circle cx="1339.1" cy="771.0" r="3.2" fill="none" stroke="#e8407a" stroke-width="1.5"/><path d="M1339.1 774.2 L1339.1 779.8 L1350.6 779.8" fill="none" stroke="#e8407a" stroke-width="1.5"/><text class="lg" x="1356.5" y="778.5">Children's Ministries Fund</text><circle cx="1339.1" cy="808.5" r="3.2" fill="none" stroke="#4be040" stroke-width="1.5"/><path d="M1339.1 811.7 L1339.1 817.3 L1350.6 817.3" fill="none" stroke="#4be040" stroke-width="1.5"/><text class="lg" x="1356.5" y="816.0">Aid Fundraising Campaign</text><circle cx="1339.1" cy="846.0" r="3.2" fill="none" stroke="#1f9a72" stroke-width="1.5"/><path d="M1339.1 849.2 L1339.1 854.8 L1350.6 854.8" fill="none" stroke="#1f9a72" stroke-width="1.5"/><text class="lg" x="1356.5" y="853.5">Building Fund</text><circle cx="1339.1" cy="883.5" r="3.2" fill="none" stroke="#9b4fd0" stroke-width="1.5"/><path d="M1339.1 886.7 L1339.1 892.3 L1350.6 892.3" fill="none" stroke="#9b4fd0" stroke-width="1.5"/><text class="lg" x="1356.5" y="891.0">Missions Fund</text><circle cx="1339.1" cy="921.0" r="3.2" fill="none" stroke="#4062d0" stroke-width="1.5"/><path d="M1339.1 924.2 L1339.1 929.8 L1350.6 929.8" fill="none" stroke="#4062d0" stroke-width="1.5"/><text class="lg" x="1356.5" y="928.5">Other</text></svg><div class="abs" style="left:1524px;top:47px;width:5.4px;height:938px;border-radius:3px;background:#a8a8a8"></div></div><div id="frameR"></div><div id="frameB"></div><div id="frameL"></div></body></html>
